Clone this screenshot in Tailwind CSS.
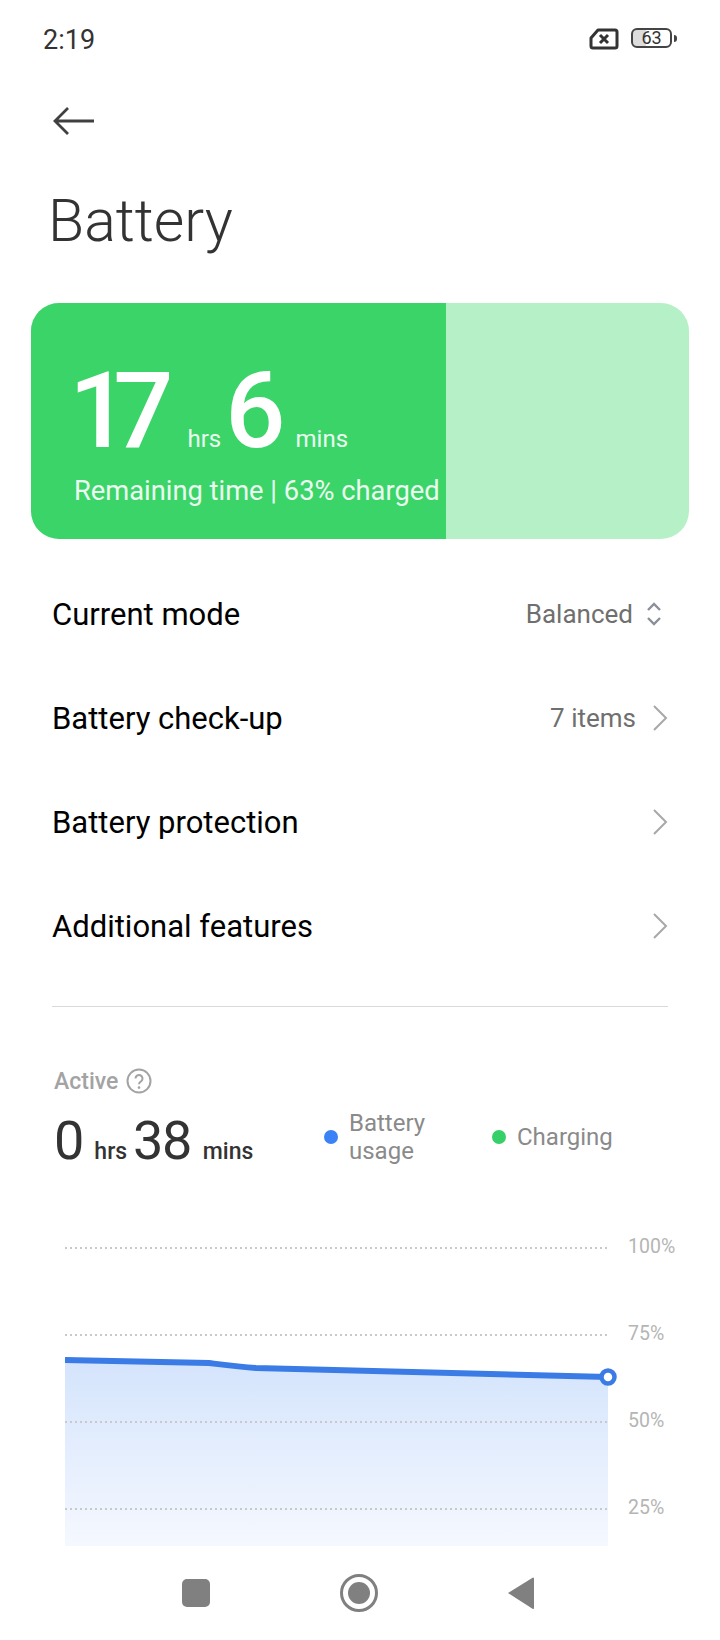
<!DOCTYPE html>
<html lang="en">
<head>
  <meta charset="UTF-8" />
  <title>Battery</title>
  <script src="https://cdn.jsdelivr.net/npm/@tailwindcss/browser@4"></script>
</head>
<body class="bg-white font-['Roboto',sans-serif] w-[720px] h-[1640px] overflow-hidden relative">

  <!-- Status bar -->
  <div class="h-[78px] pl-[43px] pr-[43px] flex items-center justify-between">
    <span class="text-[27px] text-[#333333] leading-none pt-[2px]">2:19</span>
    <div class="flex items-start gap-[12px]">
      <svg width="30" height="22" viewBox="0 0 30 22" fill="none">
        <path d="M9 2H26a2 2 0 012 2V18a2 2 0 01-2 2H4a2 2 0 01-2-2V10z" stroke="#333" stroke-width="3" stroke-linejoin="round"/>
        <path d="M11 7l8 8M19 7l-8 8" stroke="#333" stroke-width="3"/>
      </svg>
      <div class="flex items-center">
        <div class="w-[41px] h-[20px] rounded-[6px] border-2 border-[#444444] flex items-center justify-center text-[18px] leading-none text-[#333333] bg-[linear-gradient(90deg,#dddddd_0%,#dddddd_35%,#ffffff_35%)]">63</div>
        <div class="w-[3px] h-[7px] ml-[2px] bg-[#444444] rounded-r-sm"></div>
      </div>
    </div>
  </div>

  <!-- Header -->
  <div class="pl-[53px] h-[56px] flex items-center mt-[15px]">
    <svg width="42" height="28" viewBox="0 0 42 28" fill="none">
      <path d="M41 14H2M15 1L2 14l13 13" stroke="#404040" stroke-width="2.8"/>
    </svg>
  </div>
  <h1 class="pl-[48px] mt-[37px] text-[59px] leading-[70px] font-light text-[#333333]">Battery</h1>

  <!-- Battery card -->
  <div class="mx-[31px] mt-[47px] h-[236px] rounded-[28px] overflow-hidden bg-[#b6f0c6] flex">
    <div class="w-[415px] bg-[#3ad468] text-white pl-[38px] pt-[58px]">
      <div class="flex items-baseline h-[100px]">
        <span class="text-[106px] leading-[100px] font-medium tracking-[-16px]">17</span>
        <span class="text-[24px] ml-[30px] text-white/90">hrs</span>
        <span class="text-[106px] leading-[100px] ml-[4px] font-medium">6</span>
        <span class="text-[24px] ml-[10px] text-white/90">mins</span>
      </div>
      <p class="text-[27.300px] leading-[32px] mt-[14px] ml-[5px] text-white/90 whitespace-nowrap">Remaining time | 63% charged</p>
    </div>
  </div>

  <!-- Settings rows -->
  <div class="mt-[23px] px-[52px]">
    <div class="h-[104px] flex items-center justify-between">
      <span class="text-[31px] text-black pt-[2px]">Current mode</span>
      <div class="flex items-center">
        <span class="text-[26px] text-[#6f6f6f]">Balanced</span>
        <svg class="ml-[13px] mr-[6px]" width="16" height="24" viewBox="0 0 16 24" fill="none">
          <path d="M2 8l6-6 6 6M2 16l6 6 6-6" stroke="#8a8f99" stroke-width="2.400"/>
        </svg>
      </div>
    </div>
    <div class="h-[104px] flex items-center justify-between">
      <span class="text-[31px] text-black pt-[2px]">Battery check-up</span>
      <div class="flex items-center">
        <span class="text-[26px] text-[#6f6f6f]">7 items</span>
        <svg class="ml-[16px]" width="16" height="26" viewBox="0 0 16 26" fill="none">
          <path d="M2 1l12 12L2 25" stroke="#a8a8a8" stroke-width="2"/>
        </svg>
      </div>
    </div>
    <div class="h-[104px] flex items-center justify-between">
      <span class="text-[31px] text-black pt-[2px]">Battery protection</span>
      <svg width="16" height="26" viewBox="0 0 16 26" fill="none">
        <path d="M2 1l12 12L2 25" stroke="#a8a8a8" stroke-width="2"/>
      </svg>
    </div>
    <div class="h-[104px] flex items-center justify-between">
      <span class="text-[31px] text-black pt-[2px]">Additional features</span>
      <svg width="16" height="26" viewBox="0 0 16 26" fill="none">
        <path d="M2 1l12 12L2 25" stroke="#a8a8a8" stroke-width="2"/>
      </svg>
    </div>
    <div class="h-px bg-[#d9d9d9] mt-[28px]"></div>
  </div>

  <!-- Usage summary -->
  <div class="mt-[56px] pl-[54px] flex items-center h-[36px]">
    <span class="text-[23px] font-medium text-[#a3a3a3] pt-[2px]">Active</span>
    <svg class="ml-[8px]" width="26" height="26" viewBox="0 0 26 26" fill="none">
      <circle cx="13" cy="13" r="11.500" stroke="#a3a3a3" stroke-width="2"/>
      <path d="M9.500 10.500a3.500 3.500 0 116 2.400c-1.200 1.100-2.500 1.600-2.500 3.400" stroke="#a3a3a3" stroke-width="2"/>
      <circle cx="13" cy="19.600" r="1.300" fill="#a3a3a3"/>
    </svg>
  </div>
  <div class="mt-[14px] pl-[54px] flex items-center h-[56px]">
    <div class="flex items-baseline w-[270px] text-[#333333]">
      <span class="text-[54px] leading-[56px]">0</span>
      <span class="text-[23px] font-medium ml-[10px]">hrs</span>
      <span class="text-[54px] leading-[56px] ml-[6px] tracking-[-1.500px]">38</span>
      <span class="text-[23px] font-medium ml-[12px]">mins</span>
    </div>
    <div class="flex items-center -mt-[8px]">
      <span class="w-[14px] h-[14px] rounded-full bg-[#3b82f6]"></span>
      <span class="text-[24px] leading-[28px] ml-[11px] text-[#8a8a8a] w-[102px]">Battery<br>usage</span>
      <span class="w-[14px] h-[14px] rounded-full bg-[#36cf68] ml-[41px]"></span>
      <span class="text-[24px] ml-[11px] text-[#8a8a8a]">Charging</span>
    </div>
  </div>

  <!-- Chart -->
  <svg class="absolute left-0 top-[1230px]" width="720" height="316" viewBox="0 1230 720 316">
    <defs>
      <linearGradient id="area" x1="0" y1="0" x2="0" y2="1">
        <stop offset="0" stop-color="#d4e4fc"/>
        <stop offset="1" stop-color="#f5f8ff"/>
      </linearGradient>
    </defs>
    <path d="M65 1360L209 1363C225 1365 240 1367 256 1368L608 1377V1546H65Z" fill="url(#area)"/>
    <g stroke="#c9c9c9" stroke-width="2" stroke-dasharray="2 3">
      <path d="M65 1248H608"/>
      <path d="M65 1335H608"/>
      <path d="M65 1422H608"/>
      <path d="M65 1509H608"/>
    </g>
    <path d="M65 1360L209 1363C225 1365 240 1367 256 1368L608 1377" fill="none" stroke="#3b7be6" stroke-width="6"/>
    <circle cx="608" cy="1377" r="6.500" fill="#fff" stroke="#3b7be6" stroke-width="4.500"/>
    <g font-size="19.500" fill="#b5b5b5" font-family="Roboto, sans-serif">
      <text x="628" y="1253">100%</text>
      <text x="628" y="1340">75%</text>
      <text x="628" y="1427">50%</text>
      <text x="628" y="1514">25%</text>
    </g>
  </svg>

  <!-- Navigation bar -->
  <div class="absolute left-0 bottom-0 w-full h-[94px] bg-white flex items-center pl-[182px]">
    <div class="flex items-center w-[352px] justify-between">
      <div class="w-[28px] h-[28px] rounded-[5px] bg-[#808080]"></div>
      <svg width="38" height="38" viewBox="0 0 38 38">
        <circle cx="19" cy="19" r="17.500" fill="none" stroke="#808080" stroke-width="3"/>
        <circle cx="19" cy="19" r="11" fill="#808080"/>
      </svg>
      <svg width="26" height="32" viewBox="0 0 26 32">
        <path d="M25 0.500a1 1 0 011 1V31a1 1 0 01-1.500.800L0 16z" fill="#808080"/>
      </svg>
    </div>
  </div>
</body>
</html>
